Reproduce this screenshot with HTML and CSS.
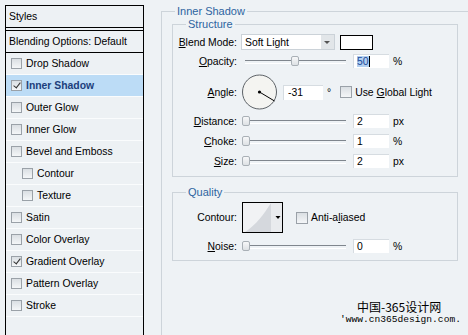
FILE: index.html
```html
<!DOCTYPE html>
<html lang="en">
<head>
<meta charset="utf-8">
<title>Layer Style – Inner Shadow</title>
<link rel="stylesheet" href="styles.css">
</head>
<body>

<div class="dialog">
  <!-- effects list -->
  <aside class="styles-list">
    <div class="list-head">Styles</div>
    <div class="list-blend">Blending Options: Default</div>
    <ul class="fx">
      <li><span class="cb"></span>Drop Shadow</li>
      <li class="active"><span class="cb on"></span>Inner Shadow</li>
      <li><span class="cb"></span>Outer Glow</li>
      <li><span class="cb"></span>Inner Glow</li>
      <li><span class="cb"></span>Bevel and Emboss</li>
      <li class="sub"><span class="cb"></span>Contour</li>
      <li class="sub"><span class="cb"></span>Texture</li>
      <li><span class="cb"></span>Satin</li>
      <li><span class="cb"></span>Color Overlay</li>
      <li><span class="cb on"></span>Gradient Overlay</li>
      <li><span class="cb"></span>Pattern Overlay</li>
      <li><span class="cb"></span>Stroke</li>
    </ul>
  </aside>

  <!-- settings -->
  <section class="settings">
    <fieldset class="group outer">
      <legend>Inner Shadow</legend>

      <fieldset class="group inner">
        <legend>Structure</legend>
        <div class="row blend">
          <span class="lbl"><u>B</u>lend Mode:</span>
          <div class="select"><span>Soft Light</span><span class="arrow"></span></div>
          <span class="swatch"></span>
        </div>
        <div class="row opacity">
          <span class="lbl"><u>O</u>pacity:</span>
          <div class="slider"><span class="thumb" style="left:50px"></span></div>
          <span class="field"><span class="sel">50</span><span class="caret"></span></span>
          <span class="unit">%</span>
        </div>
        <div class="row angle">
          <span class="lbl"><u>A</u>ngle:</span>
          <svg class="dial" width="37" height="36" viewBox="0 0 37 36">
            <circle cx="18.5" cy="18" r="17" fill="#f4f4f1" stroke="#5d6267"/>
            <line x1="18.5" y1="18" x2="33.5" y2="27" stroke="#000"/>
            <circle cx="18.5" cy="18" r="1.6" fill="#000"/>
          </svg>
          <span class="field wide">-31</span>
          <span class="deg">°</span>
          <span class="cb big"></span>
          <span class="check-lbl">Use <u>G</u>lobal Light</span>
        </div>
        <div class="row distance">
          <span class="lbl"><u>D</u>istance:</span>
          <div class="slider"><span class="thumb" style="left:1px"></span></div>
          <span class="field">2</span>
          <span class="unit">px</span>
        </div>
        <div class="row">
          <span class="lbl"><u>C</u>hoke:</span>
          <div class="slider"><span class="thumb" style="left:1px"></span></div>
          <span class="field">1</span>
          <span class="unit">%</span>
        </div>
        <div class="row">
          <span class="lbl"><u>S</u>ize:</span>
          <div class="slider"><span class="thumb" style="left:1px"></span></div>
          <span class="field">2</span>
          <span class="unit">px</span>
        </div>
      </fieldset>

      <fieldset class="group inner quality">
        <legend>Quality</legend>
        <div class="row contour">
          <span class="lbl">Contour:</span>
          <svg class="curve" width="41" height="31" viewBox="0 0 41 31">
            <rect x="0.5" y="0.5" width="40" height="30" fill="#f1f2f4" stroke="#000"/>
            <path d="M3 30 C14 23 22 12 29 1 L29 30 Z" fill="#d5d8dd"/>
            <rect x="29" y="1" width="11" height="29" fill="#e9ebee"/>
            <path d="M33.5 14 h5 l-2.5 3 z" fill="#000"/>
          </svg>
          <span class="cb big aa"></span>
          <span class="check-lbl">Anti-a<u>l</u>iased</span>
        </div>
        <div class="row noise">
          <span class="lbl"><u>N</u>oise:</span>
          <div class="slider"><span class="thumb" style="left:1px"></span></div>
          <span class="field">0</span>
          <span class="unit">%</span>
        </div>
      </fieldset>
    </fieldset>
  </section>
</div>

<div class="watermark">
  <div class="wm-cn">中国-365设计网</div>
  <div class="wm-url">'www.cn365design.com.</div>
</div>

</body>
</html>
```

FILE: styles.css
```css
*{box-sizing:border-box}
body{margin:0;height:335px;overflow:hidden;position:relative;background:#eef2f5;color:#000;font:10.4px "Liberation Sans",Arial,sans-serif}
u{text-decoration:underline;text-underline-offset:1px}

.dialog{display:flex;align-items:flex-start;gap:17px;padding:5px 0 0 5px}

/* ── effects list ── */
.styles-list{flex:none;width:139px;height:340px;border:1px solid #000;background:#edf1f4}
.list-head{height:25px;line-height:21px;padding-left:3px;border-bottom:4px double #000}
.list-blend{height:22px;line-height:21px;padding-left:3px;border-bottom:1px solid #000}
.fx{list-style:none;margin:0;padding:0}
.fx li{display:flex;align-items:center;gap:4px;height:22px;padding-left:5px;border-bottom:1px solid #fafcfd}
.fx li.sub{padding-left:16px}
.fx li.active{background:#bcdcf6;color:#1c3f7c;font-weight:bold}

.cb{flex:none;position:relative;width:11px;height:11px;border:1px solid #9aa1a8;background:linear-gradient(#dadfe3,#f4f6f8)}
.cb.on::after{content:"";position:absolute;left:3px;top:0;width:3px;height:6px;border:solid #333;border-width:0 1.4px 1.4px 0;transform:rotate(38deg)}
.cb.big{width:12px;height:12px}

/* ── settings ── */
.settings{flex:none}
.group{margin:0;padding:0;min-width:0;border:1px solid #cdd4da}
.group legend{padding:0 2px;font-size:11px;line-height:13px;color:#2d64a0}
.outer{width:320px;height:340px;padding-left:10px}
.outer>legend{margin-left:3px}
.inner{width:286px;padding-bottom:7px}
.inner>legend{margin-left:13px}
.quality{margin-top:9px;padding-bottom:6px}

.row{display:flex;align-items:center;height:16px;margin-top:4px}
.row.blend{height:18px;margin-top:2px}
.row.opacity{margin-top:2px}
.row.angle{height:36px;margin-top:5px}
.row.distance{margin-top:3px}
.row.contour{height:31px;margin-top:3px}
.row.noise{margin-top:5px}
.lbl{flex:none;width:64px;margin-right:4px;text-align:right}

.select{flex:none;display:flex;align-items:center;justify-content:space-between;width:94px;height:16px;padding-left:3px;background:#fff;border:1px solid #cbd2d8}
.arrow{position:relative;width:13px;height:14px;background:#e2e6e9}
.arrow::after{content:"";position:absolute;left:3px;top:6px;border:3px solid transparent;border-top-color:#555;border-bottom:0}
.swatch{flex:none;width:33px;height:15px;margin-left:5px;background:#fff;border:1px solid #000}

.slider{flex:none;position:relative;width:105px;height:16px}
.slider::before{content:"";position:absolute;left:4px;right:0;top:7px;height:2px;border-top:1px solid #7f868d;border-bottom:1px solid #fff}
.thumb{position:absolute;top:3px;width:8px;height:10px;border:1px solid #a9b0b6;border-radius:2px;background:linear-gradient(#f7f8f9,#dde1e4)}

.field{flex:none;display:flex;align-items:center;width:36px;height:14px;margin-left:7px;padding-left:3px;background:#fff;border-top:1px solid #d6dce1;border-left:1px solid #d6dce1}
.field.wide{width:40px;height:15px;margin-left:5px;padding-left:4px}
.sel{background:#b2d0f0;color:#1d4a9a}
.caret{width:1px;height:11px;background:#000}
.unit{margin-left:4px}
.deg{margin-left:4px}
.angle .cb{margin-left:9px}
.check-lbl{margin-left:3px}
.contour .curve{flex:none;margin-left:1px}
.aa{margin-left:13px}

/* ── watermark ── */
.watermark{position:absolute;left:340px;top:299px}
.wm-cn{padding-left:17px;font:12px/15px "Noto Sans CJK SC","Liberation Sans",sans-serif}
.wm-url{font:9.6px/11px "Liberation Mono",monospace}
```
